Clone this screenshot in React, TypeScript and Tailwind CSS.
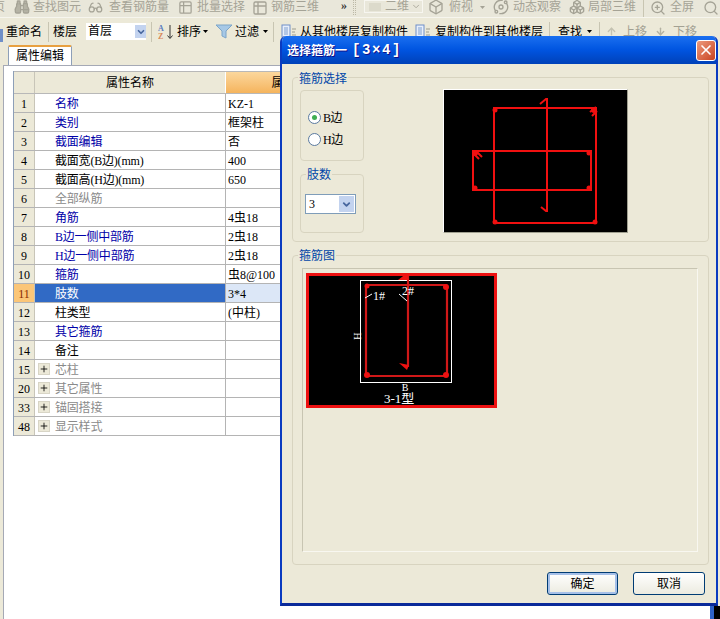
import React from "react";
import { Binoculars, Glasses, Table2, Box, Orbit, Boxes, ZoomIn, Search, Plus, ChevronDown, ArrowUp, ArrowDown, X } from "lucide-react";

const rows = [
  { no: "1", name: "名称", value: "KZ-1", tone: "blue" },
  { no: "2", name: "类别", value: "框架柱", tone: "blue" },
  { no: "3", name: "截面编辑", value: "否", tone: "blue" },
  { no: "4", name: "截面宽(B边)(mm)", value: "400", tone: "black" },
  { no: "5", name: "截面高(H边)(mm)", value: "650", tone: "black" },
  { no: "6", name: "全部纵筋", value: "", tone: "gray" },
  { no: "7", name: "角筋", value: "4虫18", tone: "blue" },
  { no: "8", name: "B边一侧中部筋", value: "2虫18", tone: "blue" },
  { no: "9", name: "H边一侧中部筋", value: "2虫18", tone: "blue" },
  { no: "10", name: "箍筋", value: "虫8@100", tone: "blue" },
  { no: "11", name: "肢数", value: "3*4", tone: "selected" },
  { no: "12", name: "柱类型", value: "(中柱)", tone: "black" },
  { no: "13", name: "其它箍筋", value: "", tone: "blue" },
  { no: "14", name: "备注", value: "", tone: "black" },
  { no: "15", name: "芯柱", value: "", tone: "group" },
  { no: "20", name: "其它属性", value: "", tone: "group" },
  { no: "33", name: "锚固搭接", value: "", tone: "group" },
  { no: "48", name: "显示样式", value: "", tone: "group" },
];

const nameColor: Record<string, string> = {
  blue: "text-[#0000a8]",
  black: "text-black",
  gray: "text-[#8a8a8a]",
  group: "text-[#8a8a8a]",
  selected: "text-white bg-[#316ac5]",
};

const Sep = ({ className = "" }: { className?: string }) => (
  <div className={`w-px h-[20px] bg-[#c8c5b2] shrink-0 ${className}`} />
);

const Caret = ({ className = "" }: { className?: string }) => (
  <svg width="5" height="3" viewBox="0 0 5 3" className={`shrink-0 ${className}`}>
    <polygon points="0,0 5,0 2.5,3" fill="currentColor" />
  </svg>
);

const DocIcon = () => (
  <svg width="16" height="16" viewBox="0 0 16 16" className="shrink-0">
    <rect x="1" y="1" width="8" height="12" fill="#e8effa" stroke="#6f8fc8" />
    <path d="M3 4h4M3 6h4M3 8h4M3 10h4" stroke="#7f9fd0" />
    <path d="M11 5h4M11 8h3M11 11h4" stroke="#9c9c90" />
  </svg>
);

function Toolbars() {
  return (
    <>
      {/* greyed out first toolbar */}
      <div className="h-[18px] bg-[#e9e7da] border-b border-[#f6f5ee] overflow-hidden flex items-start text-[#a5a396]">
        <span className="ml-[-7px] w-3 shrink-0 leading-[15px]">页</span>
        <Binoculars size={16} className="ml-[9px] shrink-0 -mt-px" fill="#b5b3a5" />
        <span className="ml-[3px] leading-[15px] w-[48px] shrink-0">查找图元</span>
        <Glasses size={15} className="ml-[7px] shrink-0" />
        <span className="ml-[6px] leading-[15px] w-[60px] shrink-0">查看钢筋量</span>
        <Table2 size={15} className="ml-[9px] shrink-0" />
        <span className="ml-[4px] leading-[15px] w-[48px] shrink-0">批量选择</span>
        <Table2 size={16} className="ml-[7px] shrink-0" />
        <span className="ml-[3px] leading-[15px] w-[48px] shrink-0">钢筋三维</span>
        <span className="ml-[22px] leading-[10px] w-[6px] text-[#333] font-bold shrink-0">»</span>
        <div className="ml-[6px] w-[3px] h-[15px] border-x border-dotted border-[#bbb8a6] shrink-0" />
        <div className="ml-[8px] w-[59px] h-[13px] border border-[#f7f6f0] flex items-center shrink-0">
          <span className="w-3 h-2 ml-1 bg-[#dcdacb] shrink-0" />
          <span className="ml-1 leading-[11px] w-[28px]">二维</span>
          <ChevronDown size={11} className="ml-auto mr-px" />
        </div>
        <Box size={16} className="ml-[5px] shrink-0 -mt-px" />
        <span className="ml-[5px] leading-[15px] w-[26px] shrink-0">俯视</span>
        <Caret className="ml-[5px] mt-[6px]" />
        <Orbit size={16} className="ml-[8px] shrink-0 -mt-px" />
        <span className="ml-[4px] leading-[15px] w-[48px] shrink-0">动态观察</span>
        <Boxes size={16} className="ml-[8px] shrink-0 -mt-px" />
        <span className="ml-[3px] leading-[15px] w-[48px] shrink-0">局部三维</span>
        <Sep className="ml-[7px]" />
        <ZoomIn size={16} className="ml-[6px] shrink-0" />
        <span className="ml-[4px] leading-[15px] w-[24px] shrink-0">全屏</span>
        <Search size={16} className="ml-[9px] shrink-0" />
      </div>
      {/* second toolbar */}
      <div className="h-[27px] bg-[#ece9d8] overflow-hidden flex items-center text-black">
        <div className="w-[3px] h-[13px] bg-[#6f8fc8] shrink-0 self-end mb-[3px]" />
        <span className="ml-[3px] w-[36px] shrink-0">重命名</span>
        <Sep className="ml-[6px]" />
        <span className="ml-[4px] w-[25px] shrink-0">楼层</span>
        <div className="ml-[8px] w-[60px] h-[17px] bg-white flex items-center shrink-0">
          <span className="ml-[2px] -mt-[2px]">首层</span>
          <div className="ml-auto w-[11px] h-[13px] bg-[#c3d3ef] flex items-center justify-center">
            <ChevronDown size={10} strokeWidth={4} className="text-[#47669e]" />
          </div>
        </div>
        <Sep className="ml-[5px]" />
        <svg width="16" height="16" viewBox="0 0 16 16" className="ml-[6px] shrink-0">
          <text x="0" y="7" fontSize="8" fill="#5b7cc0" fontWeight="700">A</text>
          <text x="0" y="15" fontSize="8" fill="#d88a5a" fontWeight="700">Z</text>
          <path d="M12 1v13M9.5 11.5L12 14.5l2.5-3" stroke="#333" fill="none" />
        </svg>
        <span className="ml-[3px] w-[25px] shrink-0">排序</span>
        <Caret className="ml-[1px] text-black" />
        <svg width="16" height="15" viewBox="0 0 16 15" className="ml-[8px] shrink-0">
          <polygon points="0,1 16,1 10,7 10,14 6,12 6,7" fill="#a6c8e6" stroke="#7da5c8" />
        </svg>
        <span className="ml-[3px] w-[25px] shrink-0">过滤</span>
        <Caret className="ml-[3px] text-black" />
        <Sep className="ml-[5px]" />
        <div className="ml-[7px]"><DocIcon /></div>
        <span className="ml-[3px] w-[108px] shrink-0">从其他楼层复制构件</span>
        <div className="ml-[7px]"><DocIcon /></div>
        <span className="ml-[4px] w-[108px] shrink-0">复制构件到其他楼层</span>
        <Sep className="ml-[6px]" />
        <span className="ml-[8px] w-[25px] shrink-0">查找</span>
        <Caret className="ml-[4px] text-black" />
        <Sep className="ml-[7px]" />
        <ArrowUp size={11} strokeWidth={3} className="ml-[6px] shrink-0 text-[#c4c2b2]" />
        <span className="ml-[6px] w-[25px] text-[#a3a193] shrink-0">上移</span>
        <ArrowDown size={11} strokeWidth={3} className="ml-[7px] shrink-0 text-[#b4b2a2]" />
        <span className="ml-[7px] w-[25px] text-[#a3a193] shrink-0">下移</span>
      </div>
    </>
  );
}

function PropertyGrid() {
  return (
    <div className="w-[340px] ml-[9px] mt-[5px] border-l border-[#8d9fb8] bg-white">
      <div className="flex h-[23px] border-y border-[#b8b8b8]">
        <div className="w-[21px] bg-[#ece9d8] border-r border-[#c8c5b8]" />
        <div className="w-[191px] bg-[#ece9d8] border-r border-white flex items-center justify-center">属性名称</div>
        <div className="flex-1 bg-gradient-to-b from-[#fbd79c] to-[#f5b45c] flex items-center justify-center">属性值</div>
      </div>
      {rows.map((row) => (
        <div key={row.no} className="flex h-[19px] border-b border-[#b4b4b4]">
          <div
            className={`w-[21px] pt-px flex items-center justify-center border-r border-[#c8c5b8] ${
              row.tone === "selected" ? "bg-[#fbc678] text-[#8a2a00]" : "bg-[#ece9d8]"
            }`}
          >
            {row.no}
          </div>
          <div className={`w-[191px] flex items-center border-r border-[#b4b4b4] ${nameColor[row.tone]}`}>
            {row.tone === "group" ? (
              <div className="ml-[3px] w-[12px] h-[12px] bg-[#ece9d8] border border-[#d8d5c6] flex items-center justify-center shrink-0">
                <Plus size={10} strokeWidth={2} className="text-black" />
              </div>
            ) : (
              <div className="w-[15px] shrink-0" />
            )}
            <span className="ml-[5px] pt-[2px] tracking-[-0.2px]">{row.name}</span>
          </div>
          <div className={`flex-1 pt-px flex items-center pl-[2px] ${row.tone === "selected" ? "bg-[#dce7f7]" : ""}`}>{row.value}</div>
        </div>
      ))}
    </div>
  );
}

const Hook = ({ d }: { d: string }) => <path d={d} stroke="#f01010" strokeWidth="2" fill="none" />;

function SelectDrawing() {
  return (
    <svg width="183" height="142" viewBox="0 0 183 142" className="bg-black block">
      <g stroke="#f01010" strokeWidth="2" fill="none">
        <rect x="50" y="18" width="102" height="115" />
        <rect x="29" y="61" width="118" height="39" />
        <path d="M103 8V122" />
      </g>
      <Hook d="M96 14l6-5h2M97 117l5 4h2M146 22l6-5M148 26l5-5M30 64l5 5M33 62l5 5" />
      <g fill="#f01010">
        <circle cx="51" cy="20" r="2.5" />
        <circle cx="150" cy="20" r="3" />
        <circle cx="51" cy="132" r="2.5" />
        <circle cx="151" cy="132" r="2.5" />
        <circle cx="31" cy="63" r="3" />
        <circle cx="145" cy="63" r="2.5" />
        <circle cx="31" cy="98" r="2.5" />
        <circle cx="145" cy="98" r="2.5" />
      </g>
    </svg>
  );
}

function ResultDrawing() {
  return (
    <svg width="185" height="129" viewBox="3 3 185 129" className="bg-black block">
      <rect x="54.5" y="7.5" width="91" height="102" stroke="#ffffff" fill="none" />
      <g stroke="#d01818" strokeWidth="2.2" fill="none">
        <rect x="60" y="12" width="81" height="91" rx="2" />
        <path d="M102 2V94" />
      </g>
      <g fill="#ee1111">
        <circle cx="61" cy="13" r="2.5" />
        <circle cx="140" cy="14" r="3" />
        <circle cx="61" cy="102" r="3" />
        <circle cx="140" cy="102" r="3" />
        <polygon points="92,7 101,0 103,7" />
        <polygon points="93,90 103,92 101,97" />
      </g>
      <path d="M59 25l7-4M93 21l8 7" stroke="#ffffff" fill="none" />
      <g fill="#ffffff" fontSize="12" fontFamily="'Liberation Serif','Noto Sans CJK SC',serif">
        <text x="67" y="27">1#</text>
        <text x="96" y="22">2#</text>
        <text x="51" y="67" textAnchor="middle" fontSize="10" transform="rotate(-90 51 63)">H</text>
        <text x="99" y="118" textAnchor="middle" fontSize="10">B</text>
        <text x="78" y="130" fontSize="13">3-1型</text>
      </g>
    </svg>
  );
}

function GroupLabel({ children, className = "" }: { children: React.ReactNode; className?: string }) {
  return <span className={`absolute bg-[#ece9d8] text-[#0046a8] px-px leading-[14px] ${className}`}>{children}</span>;
}

function Dialog() {
  return (
    <div className="absolute left-[280px] top-[36px] w-[438px] h-[570px] rounded-t-[6px] bg-[#ece9d8] border-x-[2px] border-b-[3px] border-[#0a3ac0] border-b-[#0a2a9a] flex flex-col overflow-hidden">
      <div className="h-[28px] mx-[-2px] shrink-0 bg-gradient-to-b from-[#1a6ff0] via-[#0054e0] to-[#0041b8] flex items-center pl-[7px] text-white font-bold text-[12px] [text-shadow:1px_1px_#0f1089]">
        <span className="pt-px">选择箍筋一</span>
        <span className="ml-[5px] text-[14px] tracking-[1.6px] font-['Liberation_Mono',monospace]">[3×4]</span>
        <div className="ml-auto mr-[2px] w-[20px] h-[21px] rounded-[3px] border border-white bg-gradient-to-br from-[#ec9a7c] to-[#c8401c] flex items-center justify-center">
          <X size={16} strokeWidth={2.5} className="text-white" />
        </div>
      </div>
      <div className="flex-1 flex flex-col pl-[10px] pt-[13px] relative">
        {/* upper group */}
        <div className="relative h-[165px] w-[417px] border border-[#d8d4c0] rounded-[4px] flex pl-[7px] pt-[12px]">
          <GroupLabel className="left-[5px] -top-[6px]">箍筋选择</GroupLabel>
          <div className="w-[64px] flex flex-col">
            <div className="h-[71px] border border-[#d8d4c0] rounded-[4px] flex flex-col pl-[7px] pt-[19px] gap-[7px] shrink-0">
              <div className="flex items-center h-[15px]">
                <div className="w-[13px] h-[13px] rounded-full bg-white border border-[#5a7aa0] flex items-center justify-center">
                  <div className="w-[5px] h-[5px] rounded-full bg-[#3fae52]" />
                </div>
                <span className="ml-[2px] tracking-[-0.5px]">B边</span>
              </div>
              <div className="flex items-center h-[15px]">
                <div className="w-[13px] h-[13px] rounded-full bg-white border border-[#5a7aa0]" />
                <span className="ml-[2px] tracking-[-0.5px]">H边</span>
              </div>
            </div>
            <div className="relative mt-[13px] h-[59px] border border-[#d8d4c0] rounded-[4px] pl-[4px] pt-[19px]">
              <GroupLabel className="left-[5px] -top-[7px]">肢数</GroupLabel>
              <div className="w-[51px] h-[20px] bg-white border border-[#7f9db9] flex items-center">
                <span className="ml-[3px]">3</span>
                <div className="ml-auto mr-px w-[15px] h-[16px] bg-[#c3d3ef] flex items-center justify-center">
                  <ChevronDown size={11} strokeWidth={4} className="text-[#47669e]" />
                </div>
              </div>
            </div>
          </div>
          <div className="ml-[79px] border border-l-white border-t-white border-r-[#a0a090] border-b-[#a0a090] self-start -mt-[1px] box-content">
            <SelectDrawing />
          </div>
        </div>
        {/* lower group */}
        <div className="relative mt-[13px] w-[417px] h-[310px] border border-[#d8d4c0] rounded-[4px] pt-[12px] pl-[9px]">
          <GroupLabel className="left-[5px] -top-[7px]">箍筋图</GroupLabel>
          <div className="w-[396px] h-[284px] border border-[#f8f7f0] border-l-[#c8c5b2] border-t-[#c8c5b2] pl-[3px] pt-[4px]">
            <div className="w-[191px] h-[135px] border-[3px] border-[#ee1111] box-border">
              <ResultDrawing />
            </div>
          </div>
        </div>
        {/* buttons */}
        <div className="flex justify-end gap-[15px] mt-[7px] w-[413px]">
          <button className="w-[71px] h-[23px] rounded-[3px] border border-[#003c74] bg-gradient-to-b from-white to-[#ecebe0] shadow-[inset_0_0_0_2px_#a6c0e8] flex items-center justify-center">
            确定
          </button>
          <button className="w-[72px] h-[23px] rounded-[3px] border border-[#003c74] bg-gradient-to-b from-white to-[#ecebe0] flex items-center justify-center">
            取消
          </button>
        </div>
      </div>
    </div>
  );
}

export default function App() {
  return (
    <div className="relative w-[720px] h-[619px] overflow-hidden bg-[#ece9d8] text-[12px] text-black font-['Liberation_Serif','Noto_Sans_CJK_SC',serif]">
      <Toolbars />
      <div className="relative h-[574px] flex">
        <div className="flex-1 flex flex-col min-w-0">
          {/* tab strip */}
          <div className="h-[20px] flex bg-[#ece9d8] pl-[8px] shrink-0">
            <div className="w-[64px] h-[20px] bg-white border-x border-[#8d9fb8] border-t-2 border-t-[#e8a040] rounded-t-[2px] flex items-center justify-center">
              属性编辑
            </div>
          </div>
          <div className="flex-1 ml-[3px] mr-[6px] bg-white border-l border-t border-[#a5a9b5] border-r-[4px] border-r-[#2f62c8]">
            <PropertyGrid />
          </div>
        </div>
      </div>
      <div className="absolute right-0 bottom-0 w-[6px] h-[13px] bg-black" />
      <Dialog />
    </div>
  );
}
